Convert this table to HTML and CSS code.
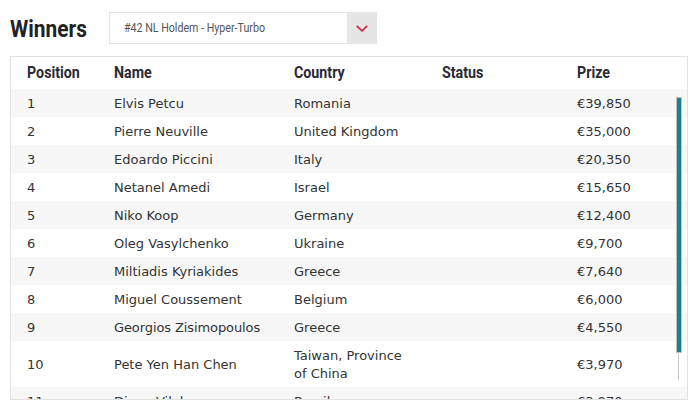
FILE: index.html
```html
<!DOCTYPE html>
<html>
<head>
<meta charset="utf-8">
<link rel="stylesheet" href="styles.css">
</head>
<body>
<div class="page">
  <div class="top">
    <h1 class="title"><span class="cond">Winners</span></h1>
    <div class="select">
      <span class="select-text"><span class="cond">#42 NL Holdem - Hyper-Turbo</span></span>
      <span class="select-btn">
        <svg width="12" height="7" viewBox="0 0 12 7"><polyline points="0.8,0.8 6,5.8 11.2,0.8" fill="none" stroke="#d0223a" stroke-width="1.6"/></svg>
      </span>
    </div>
  </div>
  <div class="table">
    <div class="row head">
      <div><span class="cond">Position</span></div><div><span class="cond">Name</span></div><div><span class="cond">Country</span></div><div><span class="cond">Status</span></div><div><span class="cond">Prize</span></div>
    </div>
    <div class="row alt"><div>1</div><div>Elvis Petcu</div><div>Romania</div><div></div><div>€39,850</div></div>
    <div class="row"><div>2</div><div>Pierre Neuville</div><div>United Kingdom</div><div></div><div>€35,000</div></div>
    <div class="row alt"><div>3</div><div>Edoardo Piccini</div><div>Italy</div><div></div><div>€20,350</div></div>
    <div class="row"><div>4</div><div>Netanel Amedi</div><div>Israel</div><div></div><div>€15,650</div></div>
    <div class="row alt"><div>5</div><div>Niko Koop</div><div>Germany</div><div></div><div>€12,400</div></div>
    <div class="row"><div>6</div><div>Oleg Vasylchenko</div><div>Ukraine</div><div></div><div>€9,700</div></div>
    <div class="row alt"><div>7</div><div>Miltiadis Kyriakides</div><div>Greece</div><div></div><div>€7,640</div></div>
    <div class="row"><div>8</div><div>Miguel Coussement</div><div>Belgium</div><div></div><div>€6,000</div></div>
    <div class="row alt"><div>9</div><div class="nw">Georgios Zisimopoulos</div><div>Greece</div><div></div><div>€4,550</div></div>
    <div class="row"><div>10</div><div>Pete Yen Han Chen</div><div>Taiwan, Province of China</div><div></div><div>€3,970</div></div>
    <div class="row alt"><div>11</div><div>Diego Vilela</div><div>Brazil</div><div></div><div>€3,970</div></div>
    <div class="scroll-track"><div class="scroll-thumb"></div></div>
  </div>
</div>
</body>
</html>
```

FILE: styles.css
```css
* { box-sizing: border-box; }
html, body { margin: 0; padding: 0; background: #fff; }
.page { padding: 12px 10px 0 10px; width: 698px; }
.top { display: flex; align-items: flex-start; height: 44px; }
.cond { display: inline-block; transform: scaleX(0.87); transform-origin: left center; white-space: nowrap; }
.title {
  margin: 0; width: 99px;
  font-family: Roboto, sans-serif;
  font-weight: bold; font-size: 24px; line-height: 32px; color: #222;
  padding-top: 1px;
}
.select {
  display: flex; width: 268px; height: 32px;
  border: 1px solid #e2e2e2; background: #fff;
}
.select-text {
  flex: 1; padding-left: 14px;
  font-family: Roboto, sans-serif;
  font-size: 13px; line-height: 30px; color: #555;
}
.select-text .cond { transform: scaleX(0.82); }
.select-btn {
  width: 30px; background: #e5e5e5;
  display: flex; align-items: center; justify-content: center;
  margin: -1px -1px -1px 0;
}
.table {
  position: relative; width: 678px; height: 344px; overflow: hidden;
  border: 1px solid #e2e2e2;
}
.row {
  display: grid; grid-template-columns: 87px 180px 148px 135px 1fr;
  font-family: "DejaVu Sans", Verdana, sans-serif; font-size: 13px;
  line-height: 18px; color: #333;
}
.row > div { padding: 6px 16px 4px 16px; display: flex; align-items: center; }
.row > div.nw { white-space: nowrap; letter-spacing: -0.1px; }
.row.alt { background: #f7f7f7; }
.row.head {
  font-family: Roboto, sans-serif;
  font-weight: bold; font-size: 16px; color: #2a2a33;
}
.row.head .cond { transform: scaleX(0.89); }
.row.head > div { padding: 7px 16px; }
.scroll-track {
  position: absolute; left: 667px; top: 40px; width: 1px; height: 283px;
  background: #c8c8c8;
}
.scroll-thumb {
  position: absolute; left: -2px; top: 0; width: 6px; height: 256px;
  background: #1c7f8a; border: 1px solid #b8c4c6;
}
```
